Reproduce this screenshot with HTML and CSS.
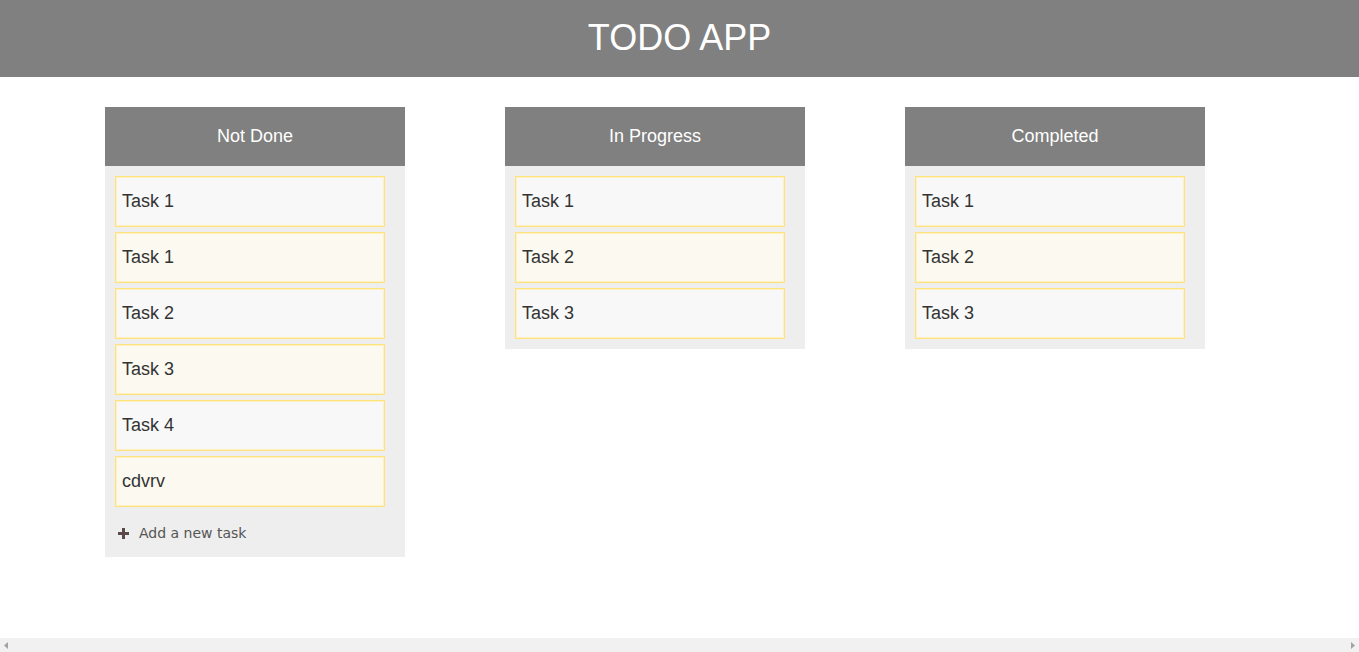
FILE: index.html
```html
<!DOCTYPE html>
<html>
<head>
<meta charset="utf-8">
<link rel="stylesheet" href="styles.css">
</head>
<body>
<header class="topbar"><h1 class="title">TODO APP</h1></header>
<main class="board">
  <section class="column">
    <div class="column-head">Not Done</div>
    <div class="column-body with-add">
      <div class="card">Task 1</div>
      <div class="card">Task 1</div>
      <div class="card">Task 2</div>
      <div class="card">Task 3</div>
      <div class="card">Task 4</div>
      <div class="card">cdvrv</div>
      <div class="add-task">
        <svg class="plus" width="11" height="11" viewBox="0 0 11 11"><path d="M4 0h3v4h4v3H7v4H4V7H0V4h4z" fill="#5b4848"/></svg>
        <span>Add a new task</span>
      </div>
    </div>
  </section>
  <section class="column">
    <div class="column-head">In Progress</div>
    <div class="column-body">
      <div class="card">Task 1</div>
      <div class="card">Task 2</div>
      <div class="card">Task 3</div>
    </div>
  </section>
  <section class="column">
    <div class="column-head">Completed</div>
    <div class="column-body">
      <div class="card">Task 1</div>
      <div class="card">Task 2</div>
      <div class="card">Task 3</div>
    </div>
  </section>
</main>
<div class="hscroll">
  <svg width="4" height="7" viewBox="0 0 4 7"><path d="M4 0v7L0 3.5z" fill="#a3a3a3"/></svg>
  <svg width="4" height="7" viewBox="0 0 4 7"><path d="M0 0v7l4-3.5z" fill="#a3a3a3"/></svg>
</div>
</body>
</html>
```
FILE: styles.css
```css
html {
  overflow: hidden;
}
body {
  margin: 0;
  height: 100vh;
  display: flex;
  flex-direction: column;
  font-family: "Liberation Sans", Arial, sans-serif;
  background: #fff;
}
.topbar {
  background: #808080;
  height: 77px;
  flex: none;
  display: flex;
  align-items: center;
  justify-content: center;
}
.title {
  margin: 0 0 2px;
  color: #fff;
  font-weight: normal;
  font-size: 36px;
  line-height: 1;
}
.board {
  flex: 1;
  display: flex;
  align-items: flex-start;
  gap: 100px;
  padding: 30px 0 0 105px;
}
.column {
  width: 300px;
  background: #eeeeee;
}
.column-head {
  background: #808080;
  color: #fff;
  height: 59px;
  display: flex;
  align-items: center;
  justify-content: center;
  font-size: 18px;
}
.column-body {
  display: flex;
  flex-direction: column;
  gap: 5px;
  padding: 10px 20px 10px 10px;
}
.column-body.with-add {
  padding-bottom: 0;
}
.card {
  box-sizing: border-box;
  height: 51px;
  border: 1px solid #ffe27c;
  box-shadow: inset 0 0 0 1px #fff1c0;
  background: #f8f8f8;
  color: #333;
  font-size: 18px;
  display: flex;
  align-items: center;
  padding-left: 6px;
}
.card:nth-child(even) {
  background: #fcfaf0;
}
.add-task {
  box-sizing: border-box;
  display: flex;
  align-items: center;
  gap: 10px;
  height: 45px;
  padding: 0 0 3px 3px;
  color: #555;
  font-family: "DejaVu Sans", Verdana, sans-serif;
  font-size: 14px;
}
.hscroll {
  flex: none;
  height: 14px;
  background: #f1f1f1;
  display: flex;
  align-items: center;
  justify-content: space-between;
  padding: 0 4px 0 4px;
}
```
